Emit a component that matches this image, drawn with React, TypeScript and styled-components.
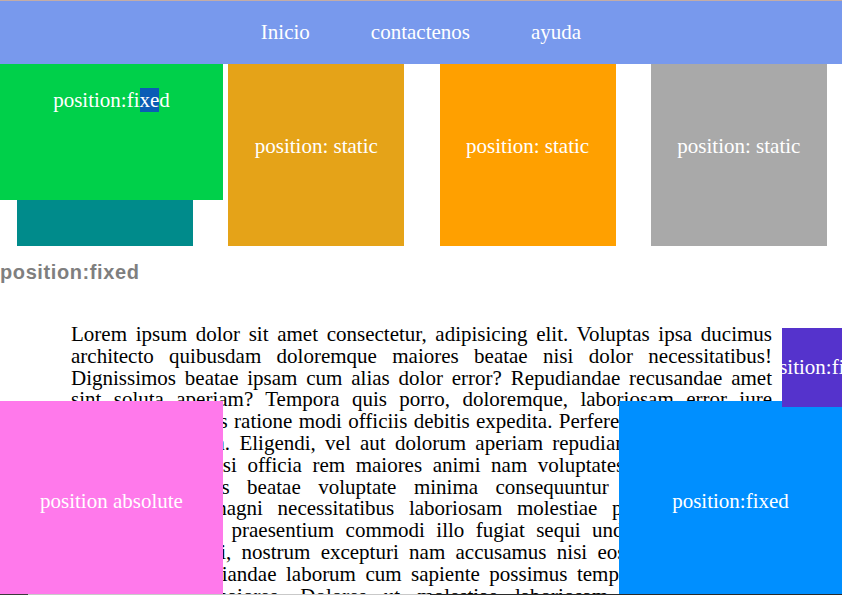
import React from "react";
import styled, { createGlobalStyle } from "styled-components";

const SERIF = `"Liberation Serif", "Times New Roman", Times, serif`;

const GlobalStyle = createGlobalStyle`
  html, body {
    margin: 0;
    padding: 0;
    background: #ffffff;
    overflow: hidden;
  }
  body {
    font-family: ${SERIF};
  }
`;

const Nav = styled.nav`
  position: fixed;
  top: 0;
  left: 0;
  right: 0;
  height: 63px;
  border-top: 1px solid #c4aca6;
  background: #7899ed;
  z-index: 10;
  display: flex;
  justify-content: center;
  align-items: center;
`;

const NavList = styled.ul`
  list-style: none;
  margin: 0;
  padding: 0;
  display: flex;
  gap: 61px;
`;

const NavItem = styled.li`
  font-family: ${SERIF};
  color: #ffffff;
  font-size: 21px;
`;

const Page = styled.main`
  padding-top: 46px;
`;

const StaticRow = styled.div`
  display: flex;
  gap: 35.3px;
  padding-left: 17px;
`;

const Box = styled.div<{ $bg: string }>`
  width: 176px;
  height: 200px;
  flex: none;
  background: ${(p) => p.$bg};
  font-family: ${SERIF};
  color: #ffffff;
  font-size: 21px;
  display: flex;
  align-items: center;
  justify-content: center;
`;

const Heading = styled.h3`
  margin: 15px 0 0 0;
  font-family: "Liberation Sans", Arial, sans-serif;
  font-weight: bold;
  font-size: 20px;
  letter-spacing: 0.6px;
  line-height: 23px;
  color: #7f7f7f;
`;

const Paragraph = styled.p`
  margin: 40px 0 0 71px;
  width: 701px;
  font-family: ${SERIF};
  font-size: 21px;
  line-height: 21.8px;
  text-align: justify;
  color: #000000;
`;

const Overlay = styled.div<{
  $bg: string;
  $top: number;
  $left?: number;
  $right?: number;
  $w: number;
  $h: number;
  $z: number;
  $fixed?: boolean;
}>`
  position: ${(p) => (p.$fixed ? "fixed" : "absolute")};
  top: ${(p) => p.$top}px;
  ${(p) => (p.$left !== undefined ? `left: ${p.$left}px;` : "")}
  ${(p) => (p.$right !== undefined ? `right: ${p.$right}px;` : "")}
  width: ${(p) => p.$w}px;
  height: ${(p) => p.$h}px;
  z-index: ${(p) => p.$z};
  background: ${(p) => p.$bg};
  font-family: ${SERIF};
  color: #ffffff;
  font-size: 21px;
  white-space: nowrap;
  overflow: hidden;
  display: flex;
  align-items: center;
  justify-content: center;
`;

const Selected = styled.span`
  background: #0b5cb5;
`;

const BottomEdge = styled.div`
  position: fixed;
  left: 0;
  right: 0;
  bottom: 0;
  height: 4px;
  z-index: 20;
  background: #ffffff;
  border-top: 1px solid transparent;
  border-image: linear-gradient(
      to right,
      #3a3a3a 0,
      #3a3a3a 29px,
      #c9c9c9 29px,
      #c9c9c9 430px,
      #2a2a2a 430px
    )
    1;
`;

const TEXT =
  "Lorem ipsum dolor sit amet consectetur, adipisicing elit. Voluptas ipsa ducimus " +
  "architecto quibusdam doloremque maiores beatae nisi dolor necessitatibus! " +
  "Dignissimos beatae ipsam cum alias dolor error? Repudiandae recusandae amet " +
  "sint soluta aperiam? Tempora quis porro, doloremque, laboriosam error iure " +
  "accusantium nobis ratione modi officiis debitis expedita. Perferendis quod quidem " +
  "nemo sunt harum. Eligendi, vel aut dolorum aperiam repudiandae fugiat, illum " +
  "dolorem quasi nisi officia rem maiores animi nam voluptates quas. Ipsum sit " +
  "magnam delectus beatae voluptate minima consequuntur eum quibusdam " +
  "exercitationem magni necessitatibus laboriosam molestiae perspiciatis, dolor " +
  "voluptatum enim praesentium commodi illo fugiat sequi unde quas aut vitae " +
  "dignissimos quasi, nostrum excepturi nam accusamus nisi eos laudantium quo " +
  "ullam quia repudiandae laborum cum sapiente possimus tempora dolorum eum " +
  "natus quaerat maiores. Dolores ut molestiae laboriosam illo consequatur " +
  "voluptatibus explicabo nulla, sapiente quae nihil fugit vero deserunt.";

export default function App() {
  return (
    <>
      <GlobalStyle />
      <Nav>
        <NavList>
          <NavItem>Inicio</NavItem>
          <NavItem>contactenos</NavItem>
          <NavItem>ayuda</NavItem>
        </NavList>
      </Nav>

      <Overlay $fixed $bg="#00d04a" $top={0} $left={0} $w={223} $h={200} $z={5}>
        <span>
          position:fi<Selected>xe</Selected>d
        </span>
      </Overlay>

      <Page>
        <StaticRow>
          <Box $bg="#008b8b">position: static</Box>
          <Box $bg="#e5a318">position: static</Box>
          <Box $bg="#ffa000">position: static</Box>
          <Box $bg="#a9a9a9">position: static</Box>
        </StaticRow>
        <Heading>position:fixed</Heading>
        <Paragraph>{TEXT}</Paragraph>
      </Page>

      <Overlay $bg="#ff79eb" $top={401} $left={0} $w={223} $h={200} $z={6}>
        position absolute
      </Overlay>
      <Overlay $fixed $bg="#008fff" $top={401} $right={0} $w={223} $h={200} $z={6}>
        position:fixed
      </Overlay>
      <Overlay $fixed $bg="#5533cc" $top={328} $left={782} $w={69} $h={79} $z={7}>
        position:fixed
      </Overlay>
      <BottomEdge />
    </>
  );
}
